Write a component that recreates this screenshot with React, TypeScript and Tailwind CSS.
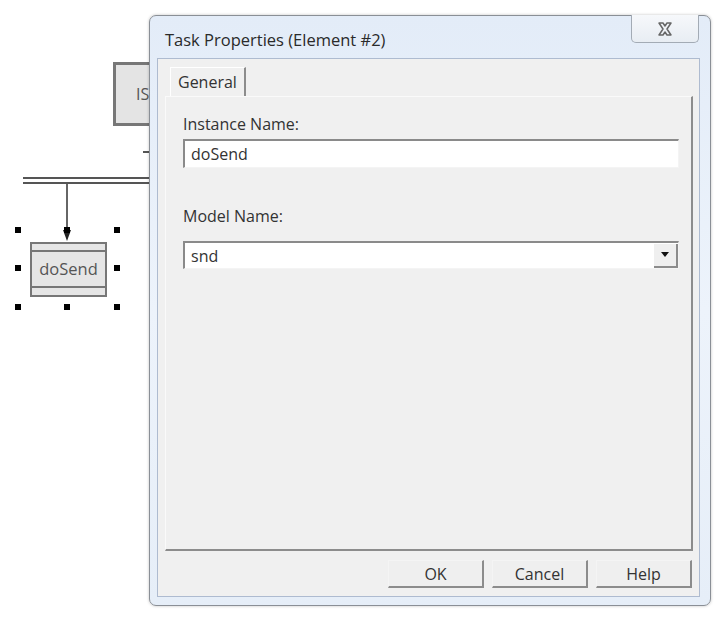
const font = { fontFamily: '"Open Sans", "Noto Sans", sans-serif' };

function Handle({ x, y }: { x: number; y: number }) {
  return <div className="absolute h-[6px] w-[6px] bg-black" style={{ left: x - 3, top: y - 3 }} />;
}

function Diagram() {
  return (
    <>
      {/* IS block, mostly hidden behind the dialog */}
      <div className="absolute left-[113px] top-[62px] flex h-[64px] w-[60px] items-center border-[3px] border-[#777] bg-[#e4e4e4] pl-[20px] text-[16px] text-[#555]">
        IS
      </div>
      <div className="absolute left-[143px] top-[151px] h-[2px] w-[10px] bg-[#555]" />
      {/* double bus line */}
      <div className="absolute left-[23px] top-[177px] h-[2px] w-[130px] bg-[#555]" />
      <div className="absolute left-[23px] top-[182px] h-[2px] w-[130px] bg-[#555]" />
      {/* arrow down */}
      <div className="absolute left-[66px] top-[184px] h-[46px] w-[2px] bg-[#666]" />
      <svg className="absolute left-[62px] top-[228px]" width="10" height="14" viewBox="0 0 10 14">
        <path d="M1 2 L9 2 L5 13 Z" fill="#222" />
      </svg>
      {/* doSend task */}
      <div className="absolute left-[30px] top-[242px] flex h-[55px] w-[77px] flex-col border-2 border-[#777] bg-[#e6e6e6]">
        <div className="h-[8px] border-b-2 border-[#777]" />
        <div className="flex flex-1 items-center justify-center text-[16.5px] text-[#555]" style={font}>
          doSend
        </div>
        <div className="h-[9px] border-t-2 border-[#777]" />
      </div>
      {[18, 67, 117].map((x) =>
        [230, 268, 307].map((y) => (x === 67 && y === 268 ? null : <Handle key={`${x}-${y}`} x={x} y={y} />))
      )}
    </>
  );
}

function Button({ label }: { label: string }) {
  return (
    <button className="flex h-[28px] w-[96px] items-center justify-center border-b-2 border-r-2 border-l border-t border-b-[#8c8c8c] border-r-[#8c8c8c] border-l-[#f4f4f4] border-t-[#f4f4f4] bg-[#efefef] text-[16px] text-[#333]">
      {label}
    </button>
  );
}

export default function App() {
  return (
    <div className="relative h-[626px] w-[718px] overflow-hidden bg-white" style={font}>
      <Diagram />

      {/* Dialog window */}
      <div className="absolute left-[149px] top-[15px] flex h-[591px] w-[562px] flex-col rounded-[7px] border border-[#8a8f96] bg-gradient-to-b from-[#e3ecf8] via-[#edf3fb] to-[#e6eef8] shadow-[0_0_3px_rgba(0,0,0,0.25)]">
        {/* title bar */}
        <div className="relative flex h-[42px] shrink-0 items-center pl-[15px] pt-[6px] text-[16.5px] text-[#2a2a2a]">
          Task Properties (Element #2)
          <div className="absolute right-[11px] top-[-1px] flex h-[28px] w-[68px] items-center justify-center rounded-b-[5px] border border-t-0 border-[#a3abb5] bg-gradient-to-b from-[#f6f8fb] to-[#e8edf3]">
            <svg width="16" height="14" viewBox="0 0 16 14">
              <path d="M2 1 L6 1 L8 4 L10 1 L14 1 L10 7 L14 13 L10 13 L8 10 L6 13 L2 13 L6 7 Z" fill="none" stroke="#666" strokeWidth="1.5" strokeLinejoin="round" />
            </svg>
          </div>
        </div>

        {/* client area */}
        <div className="mb-[8px] ml-[7px] mr-[10px] flex flex-1 flex-col border border-[#aebbd0] bg-[#f0f0f0]">
          {/* tab strip */}
          <div className="flex pl-[12px] pt-[8px]">
            <div className="flex h-[29px] items-center border-l border-t border-r-2 border-l-white border-t-white border-r-[#8c8c8c] px-[7px] text-[16px] text-[#333]">
              General
            </div>
          </div>

          {/* tab page */}
          <div className="ml-[7px] mr-[6px] flex h-[455px] flex-col border-b-2 border-r-2 border-l border-t border-b-[#8c8c8c] border-r-[#8c8c8c] border-l-[#fafafa] border-t-[#fafafa] px-[17px] pt-[17px] pb-0">
            <div className="text-[16px] leading-[20px] text-[#333]">Instance Name:</div>
            <div className="mt-[5px] flex h-[29px] w-[496px] items-center border-l-2 border-t-2 border-b border-r border-l-[#8a8a8a] border-t-[#8a8a8a] border-b-[#f4f4f4] border-r-[#f4f4f4] bg-white pl-[6px] text-[16px] text-[#333]">
              doSend
            </div>

            <div className="mt-[38px] text-[16px] leading-[20px] text-[#333]">Model Name:</div>
            <div className="mt-[15px] flex h-[28px] w-[496px] items-center border-l-2 border-t-2 border-b border-r border-l-[#8a8a8a] border-t-[#8a8a8a] border-b-[#f4f4f4] border-r-[#f4f4f4] bg-white pl-[6px] text-[16px] text-[#333]">
              <span className="flex-1">snd</span>
              <div className="flex h-[24px] w-[24px] items-center justify-center border-b-2 border-r-2 border-b-[#8c8c8c] border-r-[#8c8c8c] bg-[#efefef]">
                <svg width="8" height="5" viewBox="0 0 8 5">
                  <path d="M0 0 L8 0 L4 5 Z" fill="#111" />
                </svg>
              </div>
            </div>
          </div>

          {/* buttons */}
          <div className="mr-[7px] mt-[9px] flex justify-end gap-[8px]">
            <Button label="OK" />
            <Button label="Cancel" />
            <Button label="Help" />
          </div>
        </div>
      </div>
    </div>
  );
}
